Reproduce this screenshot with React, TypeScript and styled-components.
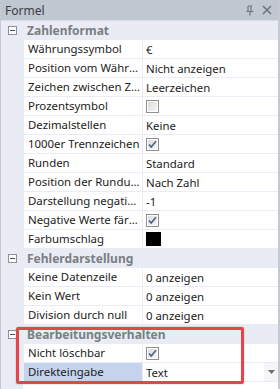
import React from "react";
import styled, { createGlobalStyle } from "styled-components";

const GlobalStyle = createGlobalStyle`
  html, body {
    margin: 0;
    padding: 0;
    background: #ffffff;
  }
  body {
    font-family: "Segoe UI", "Noto Sans", "Liberation Sans", sans-serif;
    font-size: 11.4px;
  }
`;

type Value =
  | { kind: "text"; text: string }
  | { kind: "check"; checked: boolean }
  | { kind: "color"; color: string }
  | { kind: "select"; text: string };

interface Prop {
  name: string;
  value: Value;
  selected?: boolean;
}

interface Section {
  title: string;
  props: Prop[];
}

const sections: Section[] = [
  {
    title: "Zahlenformat",
    props: [
      { name: "Währungssymbol", value: { kind: "text", text: "€" } },
      { name: "Position vom Währungssymbol", value: { kind: "text", text: "Nicht anzeigen" } },
      { name: "Zeichen zwischen Zahl und Symbol", value: { kind: "text", text: "Leerzeichen" } },
      { name: "Prozentsymbol", value: { kind: "check", checked: false } },
      { name: "Dezimalstellen", value: { kind: "text", text: "Keine" } },
      { name: "1000er Trennzeichen", value: { kind: "check", checked: true } },
      { name: "Runden", value: { kind: "text", text: "Standard" } },
      { name: "Position der Rundung", value: { kind: "text", text: "Nach Zahl" } },
      { name: "Darstellung negativer Zahlen", value: { kind: "text", text: "-1" } },
      { name: "Negative Werte färben", value: { kind: "check", checked: true } },
      { name: "Farbumschlag", value: { kind: "color", color: "#000000" } },
    ],
  },
  {
    title: "Fehlerdarstellung",
    props: [
      { name: "Keine Datenzeile", value: { kind: "text", text: "0 anzeigen" } },
      { name: "Kein Wert", value: { kind: "text", text: "0 anzeigen" } },
      { name: "Division durch null", value: { kind: "text", text: "0 anzeigen" } },
    ],
  },
  {
    title: "Bearbeitungsverhalten",
    props: [
      { name: "Nicht löschbar", value: { kind: "check", checked: true } },
      { name: "Direkteingabe", value: { kind: "select", text: "Text" }, selected: true },
    ],
  },
];

const CheckBox: React.FC<{ checked: boolean }> = ({ checked }) => (
  <svg width="13" height="13" viewBox="0 0 13 13">
    <defs>
      <linearGradient id="cbg" x1="0" y1="0" x2="1" y2="1">
        <stop offset="0" stopColor="#dcdcdc" />
        <stop offset="1" stopColor="#f6f6f6" />
      </linearGradient>
    </defs>
    <rect x="0.5" y="0.5" width="12" height="12" fill="#fff" stroke="#8e8f8f" />
    <rect x="2" y="2" width="9" height="9" fill="url(#cbg)" />
    {checked && (
      <path d="M3 6.5 L5.2 9 L10 3.2" fill="none" stroke="#4d6185" strokeWidth="1.6" />
    )}
  </svg>
);

export default function App() {
  return (
    <>
      <GlobalStyle />
      <Panel>
        <TitleBar>
          <Title>Formel</Title>
          <TitleIcons>
            <svg width="10" height="11" viewBox="0 0 10 11">
              <path d="M3 1 H7 M3 1 V6 M6 1 V6 M1.5 6.5 H8.5 M5 6.5 V10.5" stroke="#6d7380" strokeWidth="1.2" fill="none" />
            </svg>
            <svg width="10" height="10" viewBox="0 0 10 10">
              <path d="M1 1 L9 9 M9 1 L1 9" stroke="#6d7380" strokeWidth="1.6" />
            </svg>
          </TitleIcons>
        </TitleBar>
        <Grid>
          {sections.map((s) => (
            <React.Fragment key={s.title}>
              <HeaderRow>
                <Gutter>
                  <svg width="9" height="9" viewBox="0 0 9 9">
                    <rect x="0.5" y="0.5" width="8" height="8" fill="#fff" stroke="#8b919c" />
                    <path d="M2 4.5 H7" stroke="#4a4f58" />
                  </svg>
                </Gutter>
                <HeaderTitle>{s.title}</HeaderTitle>
              </HeaderRow>
              {s.props.map((p) => (
                <PropRow key={p.name}>
                  <Gutter />
                  <NameCell $selected={!!p.selected}>
                    <NameText>{p.name}</NameText>
                  </NameCell>
                  <ValueCell>
                    {p.value.kind === "text" && <span>{p.value.text}</span>}
                    {p.value.kind === "check" && <CheckBox checked={p.value.checked} />}
                    {p.value.kind === "color" && <Swatch $color={p.value.color} />}
                    {p.value.kind === "select" && (
                      <>
                        <SelectText>{p.value.text}</SelectText>
                        <DropButton>
                          <svg width="7" height="4" viewBox="0 0 7 4">
                            <path d="M0 0 H7 L3.5 4 Z" fill="#707070" />
                          </svg>
                        </DropButton>
                      </>
                    )}
                  </ValueCell>
                </PropRow>
              ))}
            </React.Fragment>
          ))}
          <Filler>
            <Gutter />
            <div />
          </Filler>
        </Grid>
        <Highlight />
      </Panel>
    </>
  );
}

const Panel = styled.div`
  position: relative;
  width: 280px;
  height: 389px;
  box-sizing: border-box;
  border-right: 2px solid #c4c9d2;
  border-left: 1px solid #c4c9d2;
  display: flex;
  flex-direction: column;
  overflow: hidden;
  background: #e9ecf5;
`;

const TitleBar = styled.div`
  height: 20px;
  flex: none;
  display: flex;
  align-items: center;
  justify-content: space-between;
  padding: 0 4px 0 4px;
  background: #c1c7d1;
  border-bottom: 1px solid #d6dbe3;
`;

const Title = styled.div`
  color: #3a3d42;
  font-size: 12px;
`;

const TitleIcons = styled.div`
  display: flex;
  align-items: center;
  gap: 7px;
  padding-right: 2px;
`;

const Grid = styled.div`
  flex: 1;
  display: flex;
  flex-direction: column;
  gap: 1px;
  background: #e9ecf5;
`;

const HeaderRow = styled.div`
  height: 18px;
  display: grid;
  grid-template-columns: 22px 1fr;
  align-items: center;
  background: #e9ecf5;
`;

const Gutter = styled.div`
  display: flex;
  align-items: center;
  justify-content: center;
  background: #e9ecf5;
  height: 100%;
`;

const HeaderTitle = styled.div`
  font-weight: bold;
  font-size: 12px;
  color: #7b7e83;
  padding-left: 4px;
  white-space: nowrap;
`;

const PropRow = styled.div`
  height: 18px;
  display: grid;
  grid-template-columns: 22px 118px 1fr;
  column-gap: 1px;
  background: #e9ecf5;
`;

const NameCell = styled.div<{ $selected: boolean }>`
  background: ${(p) => (p.$selected ? "#c5d4ec" : "#ffffff")};
  color: #1b1b1b;
  padding-left: 4px;
  line-height: 18px;
  min-width: 0;
  overflow: hidden;
`;

const NameText = styled.div`
  max-width: 112px;
  white-space: nowrap;
  overflow: hidden;
  text-overflow: ellipsis;
`;

const ValueCell = styled.div`
  background: #ffffff;
  color: #1b1b1b;
  padding-left: 3px;
  display: flex;
  align-items: center;
  white-space: nowrap;
  overflow: hidden;
`;

const SelectText = styled.span`
  flex: 1;
`;

const DropButton = styled.div`
  width: 14px;
  height: 18px;
  display: flex;
  align-items: center;
  justify-content: center;
  background: #f4f5f7;
`;

const Swatch = styled.div<{ $color: string }>`
  width: 15px;
  height: 14px;
  background: ${(p) => p.$color};
`;

const Filler = styled.div`
  flex: 1;
  display: grid;
  grid-template-columns: 22px 1fr;
  background: #ffffff;
`;

const Highlight = styled.div`
  position: absolute;
  left: 15px;
  top: 327px;
  width: 228px;
  height: 57px;
  box-sizing: border-box;
  border: 3px solid #e8434a;
  border-radius: 2px;
  box-shadow: 0 0 2px rgba(0, 0, 0, 0.25);
  pointer-events: none;
`;
